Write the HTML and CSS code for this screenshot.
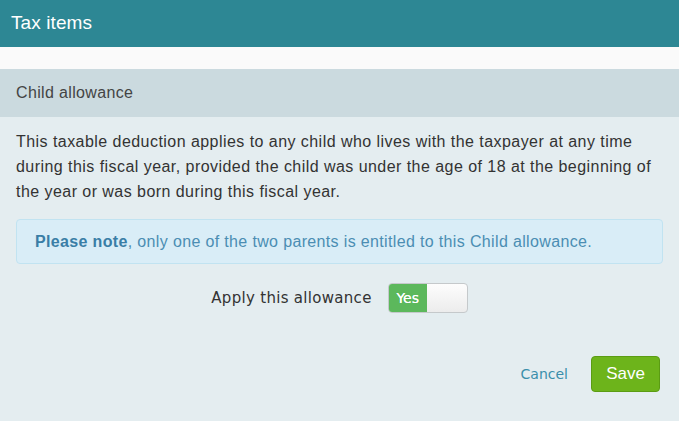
FILE: index.html
```html
<!DOCTYPE html>
<html>
<head>
<meta charset="utf-8">
<link rel="stylesheet" href="styles.css">
</head>
<body>
<div class="page">
  <header class="topbar">Tax items</header>
  <div class="strip"></div>
  <div class="section-head">Child allowance</div>
  <div class="content">
    <p class="desc">This taxable deduction applies to any child who lives with the taxpayer at any time during this fiscal year, provided the child was under the age of 18 at the beginning of the year or was born during this fiscal year.</p>
    <div class="alert"><strong>Please note</strong>, only one of the two parents is entitled to this Child allowance.</div>
    <div class="apply-row">
      <span class="apply-label">Apply this allowance</span>
      <span class="toggle"><span class="toggle-on">Yes</span><span class="toggle-knob"></span></span>
    </div>
    <div class="actions">
      <a class="cancel">Cancel</a>
      <button class="save">Save</button>
    </div>
  </div>
</div>
</body>
</html>
```
FILE: styles.css
```css
html, body {
  margin: 0;
  padding: 0;
  height: 100%;
}
body {
  font-family: "Liberation Sans", Arial, sans-serif;
  background: #e4edf0;
}
.page {
  display: flex;
  flex-direction: column;
  min-height: 100%;
}
.topbar {
  height: 47px;
  box-sizing: border-box;
  background: #2d8794;
  color: #fff;
  font-size: 19px;
  letter-spacing: 0.1px;
  padding-left: 11px;
  display: flex;
  align-items: center;
  padding-bottom: 1px;
}
.strip {
  height: 22px;
  background: #fafafa;
}
.section-head {
  height: 48px;
  box-sizing: border-box;
  background: #cbdadf;
  color: #444;
  font-size: 16px;
  letter-spacing: 0.35px;
  padding-left: 16px;
  display: flex;
  align-items: center;
}
.content {
  padding: 12px 16px 0 16px;
}
.desc {
  margin: 0;
  font-size: 16px;
  letter-spacing: 0.45px;
  line-height: 25px;
  color: #333;
}
.alert {
  margin-top: 15px;
  height: 45px;
  box-sizing: border-box;
  background: #d9edf7;
  border: 1px solid #c1e3f1;
  border-radius: 4px;
  color: #4b8db3;
  font-size: 16px;
  letter-spacing: 0.35px;
  padding-left: 18px;
  display: flex;
  align-items: center;
}
.alert strong {
  color: #3a7ea6;
  white-space: pre;
}
.apply-row {
  display: flex;
  justify-content: center;
  align-items: center;
  gap: 16px;
  margin-top: 19px;
}
.apply-label {
  font-family: "DejaVu Sans", Verdana, sans-serif;
  font-size: 15px;
  letter-spacing: 0.3px;
  color: #333;
}
.toggle {
  display: flex;
  width: 80px;
  height: 30px;
  box-sizing: border-box;
  border: 1px solid #c5c9cb;
  border-radius: 4px;
  overflow: hidden;
  background: linear-gradient(#fdfdfd, #ececec);
}
.toggle-on {
  width: 38px;
  background: #5cb85c;
  color: #fff;
  font-family: "DejaVu Sans", Verdana, sans-serif;
  font-size: 14px;
  text-shadow: 0 0 0.3px #fff;
  display: flex;
  align-items: center;
  justify-content: center;
}
.toggle-knob {
  flex: 1;
}
.actions {
  display: flex;
  justify-content: flex-end;
  align-items: center;
  gap: 23px;
  margin-top: 43px;
  padding-right: 3px;
}
.cancel {
  font-family: "DejaVu Sans", Verdana, sans-serif;
  font-size: 14px;
  color: #3a8fab;
}
.save {
  width: 69px;
  height: 36px;
  background: #6db41b;
  border: 1px solid #5b9c13;
  border-radius: 4px;
  color: #fff;
  font-family: "Liberation Sans", Arial, sans-serif;
  font-size: 17px;
  padding: 0;
}
```
